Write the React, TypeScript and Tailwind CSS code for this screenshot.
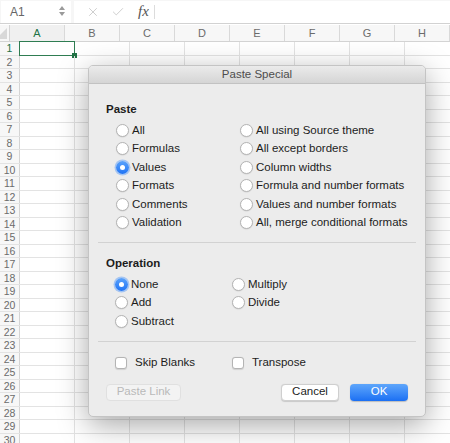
import { X, Check } from "lucide-react";

const cols = ["A", "B", "C", "D", "E", "F", "G", "H"];
const rows = Array.from({ length: 30 }, (_, i) => i + 1);

function Radio({ label, on = false }: { label: string; on?: boolean }) {
  return (
    <div className="flex h-[18.5px] items-center whitespace-nowrap">
      {on ? (
        <span className="flex h-[13px] w-[13px] shrink-0 items-center justify-center rounded-full bg-gradient-to-b from-[#5aa2fb] to-[#1f74f5] shadow-[0_0_0_1.5px_rgba(80,150,250,0.45)]">
          <span className="h-[5px] w-[5px] rounded-full bg-white" />
        </span>
      ) : (
        <span className="h-[13px] w-[13px] shrink-0 rounded-full border border-[#b4b4b4] bg-white shadow-[0_0.5px_1px_rgba(0,0,0,0.12)]" />
      )}
      <span className="ml-[3px] text-[11.5px] text-[#1c1c1c]">{label}</span>
    </div>
  );
}

function Box({ label }: { label: string }) {
  return (
    <div className="flex h-[18px] items-center whitespace-nowrap">
      <span className="h-[12px] w-[12px] shrink-0 rounded-[3px] border border-[#b4b4b4] bg-white shadow-[0_0.5px_1px_rgba(0,0,0,0.12)]" />
      <span className="ml-[8px] text-[11.5px] text-[#1c1c1c]">{label}</span>
    </div>
  );
}

export default function App() {
  return (
    <div
      className="relative h-[443px] w-[450px] overflow-hidden bg-white"
      style={{ fontFamily: "'Liberation Sans', Arial, sans-serif" }}
    >
      {/* formula bar */}
      <div className="flex h-[24px] items-center border-b border-[#d2d2d2] bg-[#f6f6f6]">
        <div className="relative ml-[1px] flex h-[22px] w-[70px] items-center bg-white pl-[9px] text-[12px] text-[#666]">
          A1
          <div className="absolute right-[6px] top-[5px] flex flex-col gap-[2px]">
            <span className="h-0 w-0 border-x-[3px] border-b-[4px] border-x-transparent border-b-[#9a9a9a]" />
            <span className="h-0 w-0 border-x-[3px] border-t-[4px] border-x-transparent border-t-[#9a9a9a]" />
          </div>
        </div>
        <div className="ml-[3px] flex h-[22px] flex-1 items-center bg-white">
          <X size={14} strokeWidth={1.4} className="ml-[12px] text-[#c4c4c4]" />
          <Check size={14} strokeWidth={1.4} className="ml-[11px] text-[#c4c4c4]" />
          <span className="ml-[13px] font-['Liberation_Serif'] text-[15px] italic text-[#555]">fx</span>
          <span className="ml-[5px] h-[14px] w-px bg-[#dcdcdc]" />
        </div>
      </div>

      {/* column headers */}
      <div className="mt-[1px] flex h-[17px] border-b border-[#d4d4d4] bg-[#f7f7f7]">
        <div className="relative w-[20px] border-r border-[#d4d4d4]">
          <span className="absolute bottom-[2px] right-[2px] h-0 w-0 border-b-[11px] border-l-[11px] border-b-[#d8d8d8] border-l-transparent" />
        </div>
        {cols.map((c) => (
          <div
            key={c}
            className={`flex w-[55px] shrink-0 items-center justify-center border-r border-[#d9d9d9] text-[11px] ${
              c === "A" ? "bg-[#f0f0f0] text-[#217346]" : "text-[#6b6b6b]"
            }`}
          >
            {c}
          </div>
        ))}
      </div>

      {/* grid */}
      {rows.map((r) => (
        <div key={r} className="flex h-[13.5px] border-b border-[#e3e3e3]">
          <div
            className={`flex w-[20px] shrink-0 items-center justify-center border-r border-[#d4d4d4] bg-[#f7f7f7] text-[10.5px] leading-none ${
              r === 1 ? "text-[#217346]" : "text-[#6b6b6b]"
            }`}
          >
            {r}
          </div>
          {cols.map((c) => (
            <div key={c} className="relative w-[55px] shrink-0 border-r border-[#e3e3e3]">
              {r === 1 && c === "A" && (
                <>
                  <span className="absolute -left-px -top-px h-[15px] w-[56px] border-[1.5px] border-[#2f7d52]" />
                  <span className="absolute -bottom-[3px] -right-[3px] h-[5px] w-[5px] bg-[#217346]" />
                </>
              )}
            </div>
          ))}
        </div>
      ))}

      {/* dialog */}
      <div className="absolute left-[88px] top-[65px] flex h-[352px] w-[338px] flex-col overflow-hidden rounded-[5px] border border-[#c4c4c4] bg-[#ececec] shadow-[0_8px_30px_rgba(0,0,0,0.35)]">
        <div className="flex h-[18px] shrink-0 items-center justify-center border-b border-[#c2c2c2] bg-gradient-to-b from-[#ebebeb] to-[#d5d5d5] text-[11.5px] text-[#4d4d4d]">
          Paste Special
        </div>

        <div className="ml-[17px] mt-[17px] h-[16px] text-[11.5px] font-bold leading-[16px] text-[#1c1c1c]">Paste</div>
        <div className="ml-[27px] mt-[4px] grid grid-cols-[124px_1fr]">
          <div>
            <Radio label="All" />
            <Radio label="Formulas" />
            <Radio label="Values" on />
            <Radio label="Formats" />
            <Radio label="Comments" />
            <Radio label="Validation" />
          </div>
          <div>
            <Radio label="All using Source theme" />
            <Radio label="All except borders" />
            <Radio label="Column widths" />
            <Radio label="Formula and number formats" />
            <Radio label="Values and number formats" />
            <Radio label="All, merge conditional formats" />
          </div>
        </div>

        <div className="mx-[9px] mt-[10px] h-px bg-[#d2d2d2]" />

        <div className="ml-[17px] mt-[12px] h-[16px] text-[11.5px] font-bold leading-[16px] text-[#1c1c1c]">Operation</div>
        <div className="ml-[26px] mt-[4px] grid grid-cols-[117px_1fr]">
          <div>
            <Radio label="None" on />
            <Radio label="Add" />
            <Radio label="Subtract" />
          </div>
          <div>
            <Radio label="Multiply" />
            <Radio label="Divide" />
          </div>
        </div>

        <div className="mx-[9px] mt-[10px] h-px bg-[#d2d2d2]" />

        <div className="ml-[26px] mt-[12px] grid grid-cols-[117px_1fr]">
          <Box label="Skip Blanks" />
          <Box label="Transpose" />
        </div>

        <div className="mx-[17px] mt-[12px] flex h-[17px] items-center">
          <div className="flex h-[17px] w-[75px] items-center justify-center rounded-[4px] border border-[#e0e0e0] bg-[#f3f3f3] text-[11.5px] text-[#b9b9b9]">
            Paste Link
          </div>
          <div className="ml-auto flex h-[17px] w-[58px] items-center justify-center rounded-[4px] border border-[#cfcfcf] bg-white text-[11.5px] text-[#1c1c1c] shadow-[0_0.5px_1px_rgba(0,0,0,0.15)]">
            Cancel
          </div>
          <div className="ml-[11px] flex h-[17px] w-[58px] items-center justify-center rounded-[4px] bg-gradient-to-b from-[#5ea6fb] to-[#1a6ff3] text-[11.5px] text-white shadow-[0_0.5px_1px_rgba(0,0,0,0.2)]">
            OK
          </div>
        </div>
      </div>
    </div>
  );
}
